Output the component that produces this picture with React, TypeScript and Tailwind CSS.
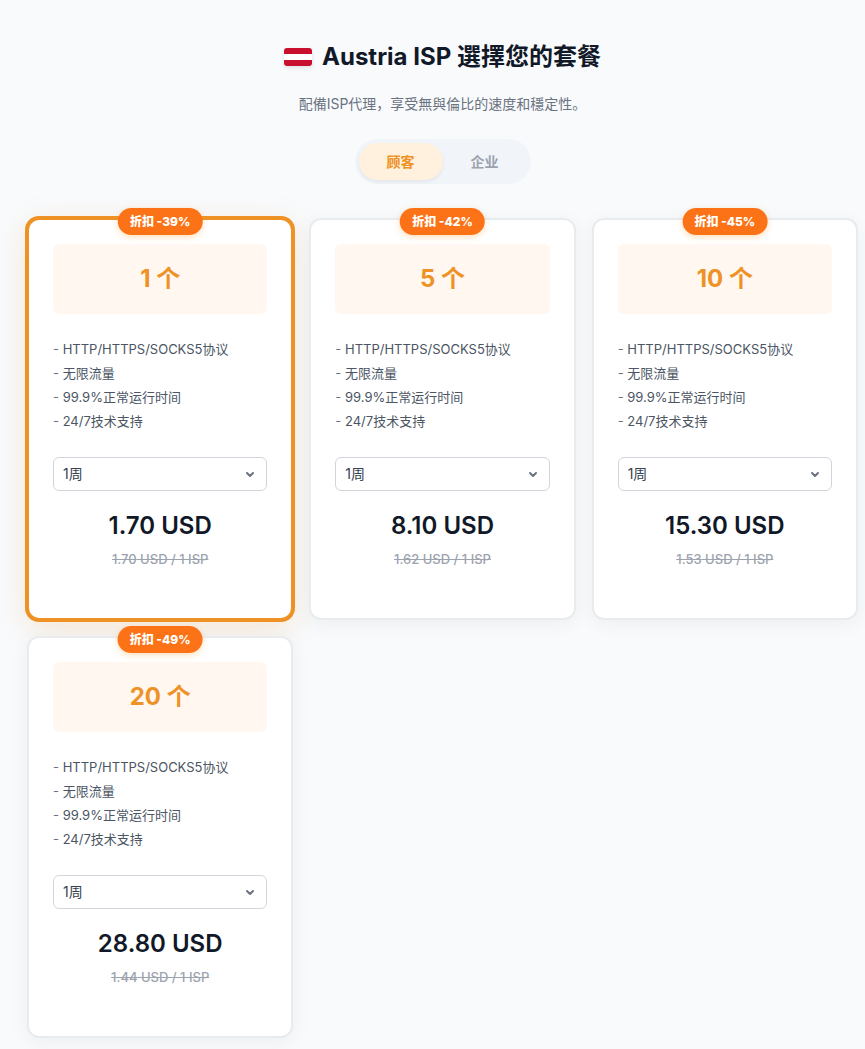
import { useState } from "react";

type Plan = {
  count: number;
  discount: number;
  price: string;
  unitPrice: string;
};

const plans: Plan[] = [
  { count: 1, discount: 39, price: "1.70", unitPrice: "1.70" },
  { count: 5, discount: 42, price: "8.10", unitPrice: "1.62" },
  { count: 10, discount: 45, price: "15.30", unitPrice: "1.53" },
  { count: 20, discount: 49, price: "28.80", unitPrice: "1.44" },
];

const features = ["HTTP/HTTPS/SOCKS5协议", "无限流量", "99.9%正常运行时间", "24/7技术支持"];

const audiences = ["顾客", "企业"];

function AustriaFlag() {
  return (
    <svg
      viewBox="0 0 28 18"
      className="h-[18px] w-7 rounded-[3px] shadow-[0_2px_4px_rgba(0,0,0,0.1)]"
      aria-hidden="true"
    >
      <rect width="28" height="18" fill="#fff" />
      <rect width="28" height="6" fill="#c8102e" />
      <rect y="12" width="28" height="6" fill="#c8102e" />
    </svg>
  );
}

function PlanCard({ plan, selected, onSelect }: { plan: Plan; selected: boolean; onSelect: () => void }) {
  const frame = selected
    ? "border-[#ee9226] shadow-[0_0_0_2px_#ee9226,0_8px_32px_rgba(238,146,38,0.2)]"
    : "border-[#e8ecef] shadow-[0_4px_20px_rgba(0,0,0,0.05)]";

  return (
    <article
      onClick={onSelect}
      className={`relative cursor-pointer rounded-xl border-2 bg-white px-6 pt-6 pb-12 ${frame}`}
    >
      <span className="absolute -top-3 left-1/2 -translate-x-1/2 rounded-full bg-[#fb7316] px-3 py-1 text-xs leading-[19px] font-extrabold whitespace-nowrap text-white shadow-[0_2px_6px_rgba(251,146,22,0.3)]">
        折扣 -{plan.discount}%
      </span>
      <h2 className="rounded-md bg-[#fff7f0] py-4 text-center text-2xl leading-[38px] font-bold text-[#ee9226]">
        {plan.count} 个
      </h2>
      <ul className="mt-[23px] text-[13px] leading-6 text-[#4b5563]">
        {features.map((feature) => (
          <li key={feature}>
            <span className="text-[#6b7280]">- </span>
            {feature}
          </li>
        ))}
      </ul>
      <div className="relative mt-6">
        <select
          aria-label="时长"
          className="block h-[34px] w-full appearance-none rounded-md border border-[#d1d5db] bg-white px-[9px] text-sm text-[#374151]"
        >
          <option>1周</option>
        </select>
        <svg
          viewBox="0 0 16 16"
          className="pointer-events-none absolute top-[9px] right-[9px] size-4"
          fill="none"
          stroke="#6b7280"
          strokeWidth="2"
          strokeLinecap="round"
          strokeLinejoin="round"
          aria-hidden="true"
        >
          <path d="M5 7l3 3 3-3" />
        </svg>
      </div>
      <p className="mt-4 text-center text-2xl leading-[38px] font-semibold text-[#111827]">{plan.price} USD</p>
      <p className="mt-1 text-center text-[13px] leading-[21px] font-medium text-[#9ca3af] line-through">
        {plan.unitPrice} USD / 1 ISP
      </p>
    </article>
  );
}

export default function App() {
  const [selected, setSelected] = useState(1);
  const [audience, setAudience] = useState(audiences[0]);

  return (
    <main
      lang="zh-CN"
      className="min-h-screen bg-[#f8fafc] pt-[37px] pr-[7px] pb-3 pl-[27px] font-['Inter','Noto_Sans_CJK_SC',sans-serif]"
    >
      <header className="flex flex-col items-center">
        <h1 className="flex items-center gap-[10px] text-2xl leading-10 font-bold text-[#111827]">
          <AustriaFlag />
          <span>Austria ISP 選擇您的套餐</span>
        </h1>
        <p className="mt-[15px] text-sm leading-6 text-[#6b7280]">配備ISP代理，享受無與倫比的速度和穩定性。</p>
        <div className="mt-[23px] flex rounded-full bg-[#f1f5f9] p-1">
          {audiences.map((name) => (
            <button
              key={name}
              type="button"
              aria-pressed={name === audience}
              onClick={() => setAudience(name)}
              className={`rounded-full px-7 py-2 text-sm leading-[21px] font-semibold ${
                name === audience
                  ? "bg-[#fff1dd] text-[#ee9226] shadow-[0_2px_4px_rgba(0,0,0,0.06)]"
                  : "text-[#9ca3af]"
              }`}
            >
              {name}
            </button>
          ))}
        </div>
      </header>
      <section className="mt-[34px] grid grid-cols-3 gap-4">
        {plans.map((plan) => (
          <PlanCard
            key={plan.count}
            plan={plan}
            selected={plan.count === selected}
            onSelect={() => setSelected(plan.count)}
          />
        ))}
      </section>
    </main>
  );
}
